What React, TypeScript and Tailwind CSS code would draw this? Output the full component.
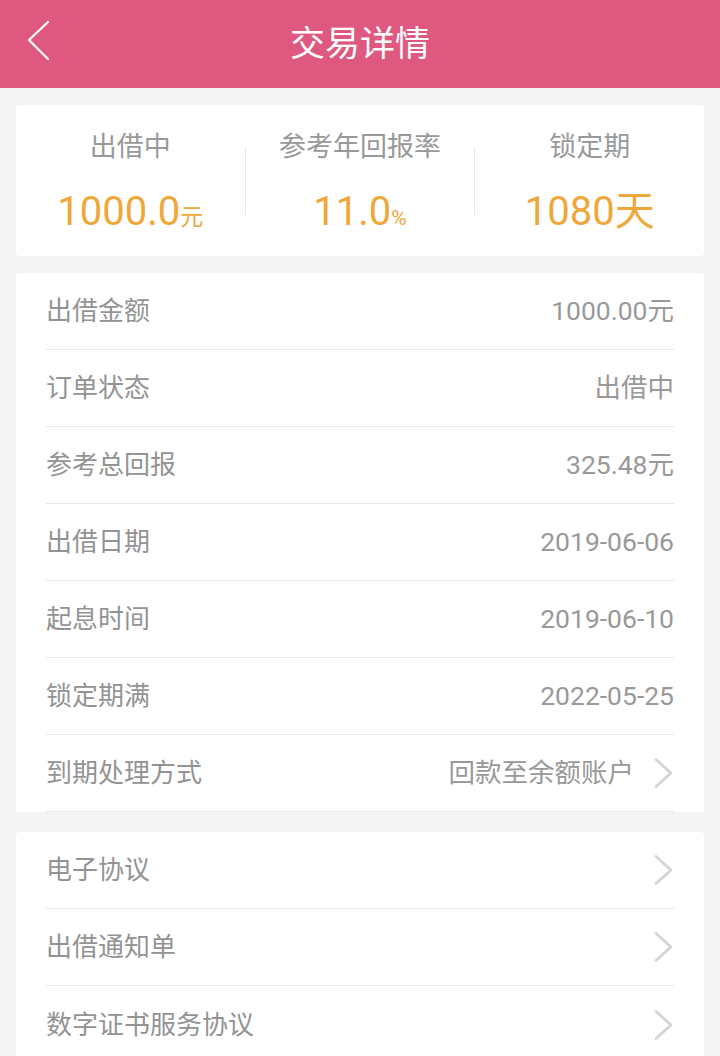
import React from "react";

const font = { fontFamily: '"Roboto", "Noto Sans CJK SC", sans-serif' };

function Chevron() {
  return (
    <svg width="20" height="30" viewBox="0 0 20 30" className="shrink-0">
      <path d="M2 1.5 L17 15 L2 28.5" fill="none" stroke="#d4d4d4" strokeWidth="2.8" strokeLinecap="round" strokeLinejoin="round" />
    </svg>
  );
}

function Row({ label, value, arrow, last }: { label: string; value?: string; arrow?: boolean; last?: boolean }) {
  return (
    <div className={`flex h-[77px] items-center justify-between ${last ? "" : "border-b border-[#e8e8e8]"}`}>
      <span className="text-[26px] leading-none text-[#939393]">{label}</span>
      <div className="flex items-center gap-[20px]">
        {value && <span className="text-[26.5px] leading-none text-[#999999]">{value}</span>}
        {arrow && <Chevron />}
      </div>
    </div>
  );
}

export default function App() {
  const rows1 = [
    { label: "出借金额", value: "1000.00元" },
    { label: "订单状态", value: "出借中" },
    { label: "参考总回报", value: "325.48元" },
    { label: "出借日期", value: "2019-06-06" },
    { label: "起息时间", value: "2019-06-10" },
    { label: "锁定期满", value: "2022-05-25" },
    { label: "到期处理方式", value: "回款至余额账户", arrow: true },
  ];
  const rows2 = ["电子协议", "出借通知单", "数字证书服务协议"];
  return (
    <div className="min-h-[1056px] h-[1056px] overflow-hidden bg-[#f4f4f4]" style={font}>
      <div className="relative flex h-[88px] items-center justify-center bg-[#de5880]">
        <svg width="24" height="42" viewBox="0 0 24 42" className="absolute left-[27px] top-[20px]">
          <path d="M21 2 L2 20 L21 39" fill="none" stroke="#ffffff" strokeWidth="2.2" strokeLinecap="round" strokeLinejoin="round" />
        </svg>
        <span className="text-[35px] leading-none text-white">交易详情</span>
      </div>

      <div className="mx-[16px] mt-[17px] flex h-[151px] rounded-[4px] bg-white">
        <div className="flex flex-1 flex-col items-center pt-[28px]">
          <span className="text-[27px] leading-[28px] text-[#999999]">出借中</span>
          <span className="mt-[31px] text-[40px] leading-[40px] text-[#efa73a]">
            1000.0<span className="text-[23px]">元</span>
          </span>
        </div>
        <div className="h-[68px] w-px self-center bg-[#e8e8e8]" />
        <div className="flex flex-1 flex-col items-center pt-[28px]">
          <span className="text-[27px] leading-[28px] text-[#999999]">参考年回报率</span>
          <span className="mt-[31px] text-[40px] leading-[40px] text-[#efa73a]">
            11.0<span className="text-[21px]">%</span>
          </span>
        </div>
        <div className="h-[68px] w-px self-center bg-[#e8e8e8]" />
        <div className="flex flex-1 flex-col items-center pt-[28px]">
          <span className="text-[27px] leading-[28px] text-[#999999]">锁定期</span>
          <span className="mt-[31px] text-[40px] leading-[40px] text-[#efa73a]">1080天</span>
        </div>
      </div>

      <div className="mx-[16px] mt-[17px] rounded-[4px] bg-white px-[30px]">
        {rows1.map((r) => (
          <Row key={r.label} label={r.label} value={r.value} arrow={r.arrow} />
        ))}
      </div>

      <div className="mx-[16px] mt-[20px] rounded-[4px] bg-white px-[30px]">
        {rows2.map((r, i) => (
          <Row key={r} label={r} arrow last={i === rows2.length - 1} />
        ))}
      </div>
    </div>
  );
}
